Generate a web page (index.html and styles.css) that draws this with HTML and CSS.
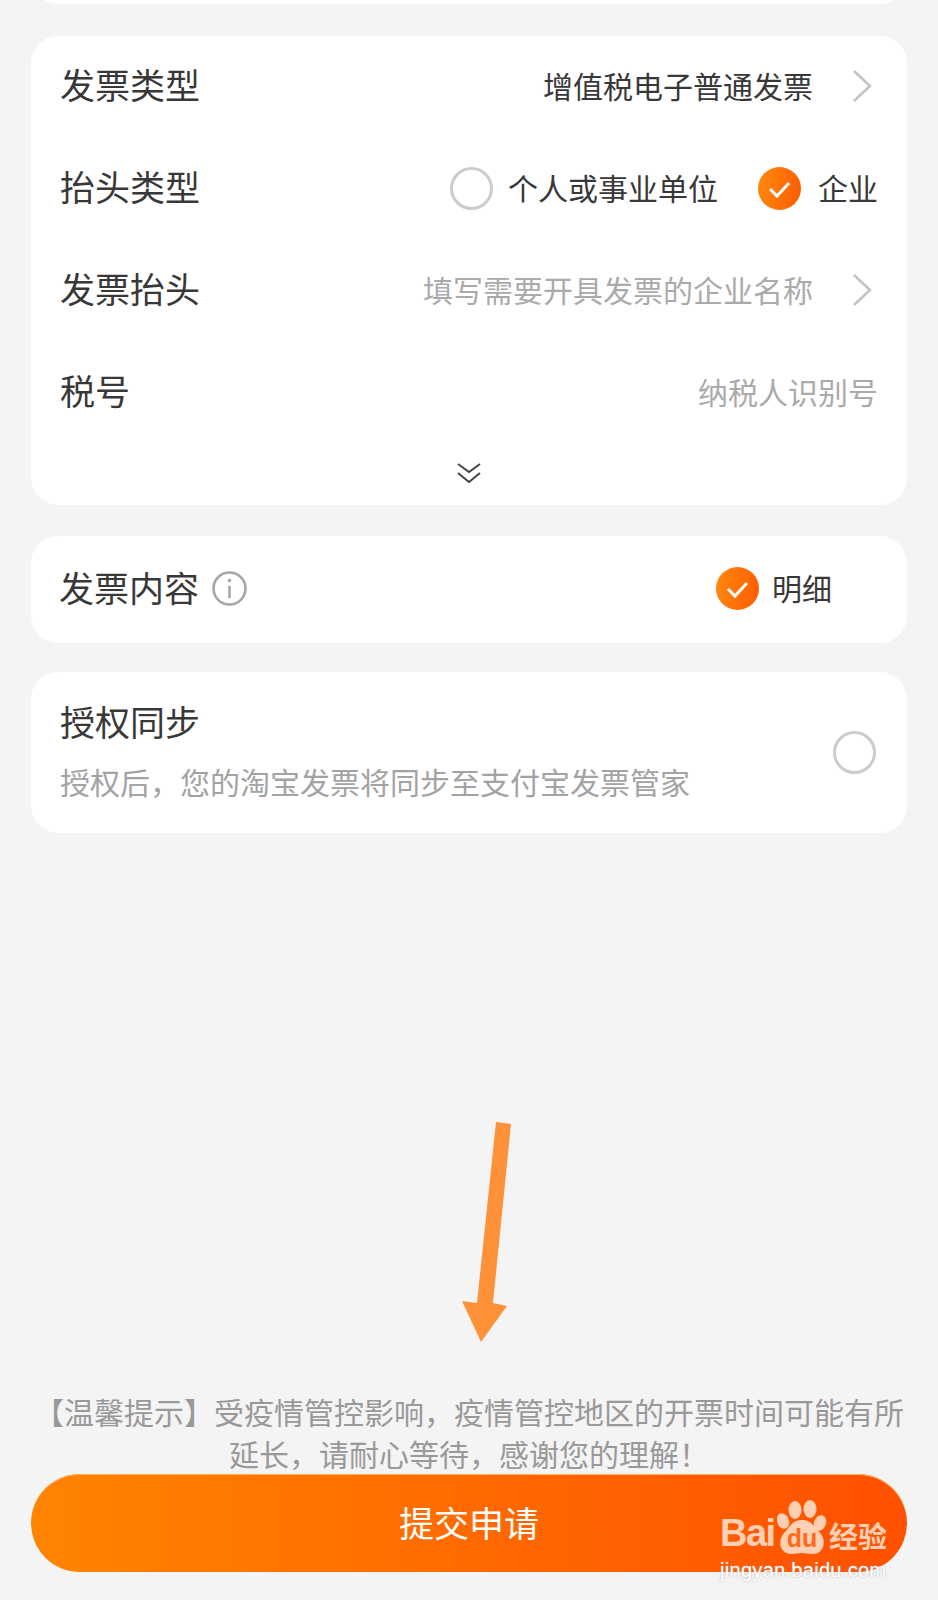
FILE: index.html
```html
<!DOCTYPE html>
<html lang="zh">
  <head>
    <meta charset="UTF-8">
    <meta name="viewport" content="width=device-width, initial-scale=1.0">
    <title>发票申请</title>
    <link rel="stylesheet" href="styles.css">
  </head>
  <body>
    <div class="page">
      <div class="card-tail"></div>

      <div class="card card-invoice">
        <div class="row">
          <span class="label">发票类型</span>
          <div class="value-wrap">
            <span class="value">增值税电子普通发票</span>
            <svg class="arrow-right" viewBox="0 0 20 34"><path d="M2 2 L18 17 L2 32"/></svg>
          </div>
        </div>
        <div class="row">
          <span class="label">抬头类型</span>
          <div class="radio-group">
            <span class="radio"></span>
            <span class="value">个人或事业单位</span>
            <span class="radio-checked"><svg viewBox="0 0 43 43"><path d="M12 22 L19 29 L31 16"/></svg></span>
            <span class="value">企业</span>
          </div>
        </div>
        <div class="row">
          <span class="label">发票抬头</span>
          <div class="value-wrap">
            <span class="value muted">填写需要开具发票的企业名称</span>
            <svg class="arrow-right" viewBox="0 0 20 34"><path d="M2 2 L18 17 L2 32"/></svg>
          </div>
        </div>
        <div class="row">
          <span class="label">税号</span>
          <span class="value muted">纳税人识别号</span>
        </div>
        <div class="more">
          <svg class="more-icon" viewBox="0 0 24 20"><path d="M1 1 L12 9 L23 1 M1 10 L12 19 L23 10"/></svg>
        </div>
      </div>

      <div class="card card-content">
        <div class="content-title">
          <span class="label">发票内容</span>
          <svg class="info" viewBox="0 0 35 35">
            <circle cx="17.5" cy="17.5" r="16"/>
            <circle class="info-dot" cx="17.5" cy="9.5" r="1.8"/>
            <path d="M17.5 15 V27"/>
          </svg>
        </div>
        <div class="content-option">
          <span class="radio-checked"><svg viewBox="0 0 43 43"><path d="M12 22 L19 29 L31 16"/></svg></span>
          <span class="value">明细</span>
        </div>
      </div>

      <div class="card card-sync">
        <div class="sync-text">
          <div class="label">授权同步</div>
          <div class="sync-sub">授权后，您的淘宝发票将同步至支付宝发票管家</div>
        </div>
        <span class="radio"></span>
      </div>

      <p class="tips">【温馨提示】受疫情管控影响，疫情管控地区的开票时间可能有所延长，请耐心等待，感谢您的理解！</p>
      <div class="submit">提交申请</div>

      <!-- annotation and watermark sit on top of the screenshot -->
      <svg class="annotation" viewBox="0 0 50 222">
        <polygon points="34,0 49,2 31,181 45,184 19,220 0,179 15,181"/>
      </svg>

      <div class="watermark">
        <div class="wm-logo">
          <span class="wm-bai">Bai</span>
          <span class="wm-paw">
            <svg viewBox="0 0 50 54">
              <ellipse cx="18" cy="10" rx="6.5" ry="9"/>
              <ellipse cx="33" cy="9" rx="6.5" ry="9"/>
              <ellipse cx="6" cy="21" rx="6" ry="8" transform="rotate(-20 6 21)"/>
              <ellipse cx="43" cy="23" rx="6" ry="8" transform="rotate(20 43 23)"/>
              <path d="M25 20 C35 20 37 27 43 33 C50 40 47 54 36 54 C31 54 28 53 25 53 C22 53 19 54 14 54 C3 54 0 41 7 33 C13 27 15 20 25 20 Z"/>
            </svg>
            <span class="wm-du">du</span>
          </span>
          <span class="wm-jy">经验</span>
        </div>
        <div class="wm-url">jingyan.baidu.com</div>
      </div>
    </div>
  </body>
</html>
```

FILE: styles.css
```css
body {
    margin: 0;
    background-color: #f4f4f4;
    font-family: "Noto Sans CJK SC", "Noto Sans", sans-serif;
    color: #383838;
}

.page {
    position: relative;
    display: flex;
    flex-direction: column;
    box-sizing: border-box;
    height: 1600px;
    padding: 0 31px 28px;
    overflow: hidden;
}

.card-tail {
    flex: none;
    height: 27px;
    margin-top: -23px;
    background: #fff;
    border-radius: 0 0 27px 27px;
}

.card {
    flex: none;
    background: #fff;
    border-radius: 27px;
}

.card-invoice {
    margin-top: 32px;
    height: 469px;
    padding: 0 29px;
}

.row {
    display: flex;
    justify-content: space-between;
    align-items: center;
    height: 102px;
}

.label {
    font-size: 35px;
    line-height: 46px;
    color: #383838;
}

.row .label {
    margin-bottom: 6px;
}

.value {
    margin-bottom: 4px;
    font-size: 30px;
    line-height: 40px;
    color: #383838;
}

.muted {
    color: #aaa;
}

.value-wrap {
    display: flex;
    align-items: center;
}

.arrow-right {
    width: 20px;
    height: 34px;
    margin-left: 39px;
    margin-right: 6px;
    margin-bottom: 2px;
    fill: none;
    stroke: #c4c4c4;
    stroke-width: 2.6;
}

.more {
    display: flex;
    justify-content: center;
    padding-top: 19px;
}

.more-icon {
    display: block;
    width: 24px;
    height: 20px;
    fill: none;
    stroke: #444;
    stroke-width: 2;
}

.radio-group {
    display: flex;
    align-items: center;
    padding-bottom: 2px;
}

.radio-group .value {
    margin-bottom: 2px;
}

.radio {
    display: block;
    box-sizing: border-box;
    width: 43px;
    height: 43px;
    margin-right: 15px;
    border: 3px solid #ccc;
    border-radius: 50%;
}

.radio-checked {
    display: block;
    width: 43px;
    height: 43px;
    margin-right: 17px;
    border-radius: 50%;
    background: linear-gradient(100deg, #ff8a10, #ff5a00);
}

.radio-group .radio-checked {
    margin-left: 40px;
}

.radio-checked svg {
    display: block;
    fill: none;
    stroke: #fff;
    stroke-width: 3;
}

.card-content {
    display: flex;
    justify-content: space-between;
    align-items: center;
    margin-top: 31px;
    height: 107px;
    padding: 0 75px 2px 28px;
    box-sizing: border-box;
}

.content-title {
    display: flex;
    align-items: center;
}

.content-title .label {
    margin-bottom: 4px;
}

.info {
    width: 35px;
    height: 35px;
    margin-left: 13px;
    fill: none;
    stroke: #a6a6a6;
    stroke-width: 2.6;
}

.info .info-dot {
    fill: #a6a6a6;
    stroke: none;
}

.content-option {
    display: flex;
    align-items: center;
}

.content-option .radio-checked {
    margin-right: 13px;
}

.card-sync {
    display: flex;
    justify-content: space-between;
    align-items: center;
    margin-top: 29px;
    height: 161px;
    padding: 0 31px 0 29px;
    box-sizing: border-box;
}

.sync-text {
    margin-bottom: 6px;
}

.sync-sub {
    margin-top: 17px;
    font-size: 30px;
    line-height: 40px;
    color: #a3a3a3;
}

.card-sync .radio {
    margin-right: 0;
}

.tips {
    margin: auto 0 0;
    font-size: 30px;
    line-height: 42px;
    text-align: center;
    color: #999;
}

.submit {
    flex: none;
    height: 98px;
    line-height: 96px;
    border-radius: 49px;
    background: linear-gradient(90deg, #ff8400, #ff5000);
    box-shadow: inset 0 1px 0 #ffb060;
    font-size: 35px;
    text-align: center;
    color: #fff;
}

.annotation {
    position: absolute;
    left: 462px;
    top: 1122px;
    width: 50px;
    height: 222px;
    fill: #ff9238;
}

.watermark {
    position: absolute;
    left: 720px;
    top: 1500px;
    width: 170px;
    color: #ffcfb4;
}

.wm-logo {
    display: flex;
    align-items: flex-end;
    height: 54px;
}

.wm-bai {
    width: 57px;
    font-family: "Liberation Sans", sans-serif;
    font-size: 38px;
    font-weight: bold;
    line-height: 41px;
    letter-spacing: -1.5px;
}

.wm-paw {
    position: relative;
    display: block;
    width: 50px;
    height: 54px;
    margin-right: 2px;
}

.wm-paw svg {
    display: block;
    fill: #ffcfb4;
}

.wm-du {
    position: absolute;
    left: 5px;
    bottom: 2px;
    width: 40px;
    font-family: "Liberation Sans", sans-serif;
    font-size: 25px;
    font-weight: bold;
    line-height: 28px;
    text-align: center;
    color: #ff6a1a;
}

.wm-jy {
    font-size: 29px;
    font-weight: 700;
    line-height: 38px;
}

.wm-url {
    margin-top: 4px;
    font-family: "Liberation Sans", sans-serif;
    font-size: 20px;
    line-height: 24px;
    letter-spacing: 0.3px;
    color: #fff;
    text-shadow: 0 0 2px #aaa;
}
```
